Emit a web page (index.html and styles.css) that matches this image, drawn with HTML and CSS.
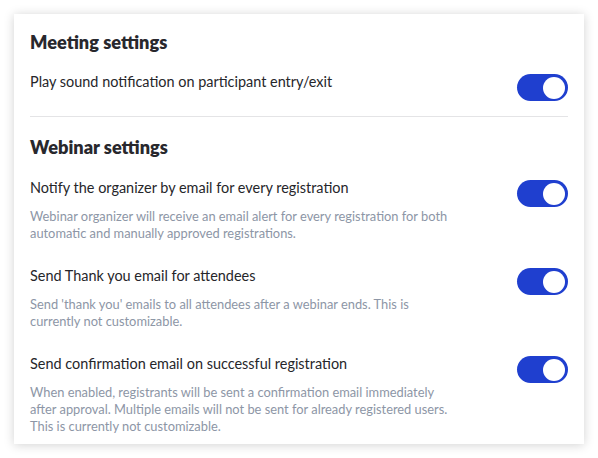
FILE: index.html
```html
<!DOCTYPE html>
<html>
<head>
<meta charset="utf-8">
<link rel="stylesheet" href="styles.css">
</head>
<body>
<div class="card">
  <section class="section section-meeting">
    <h2 class="title">Meeting settings</h2>
    <div class="row">
      <div class="text">
        <div class="label">Play sound notification on participant entry/exit</div>
      </div>
      <span class="toggle"><span class="knob"></span></span>
    </div>
  </section>
  <hr class="divider">
  <section class="section section-webinar">
    <h2 class="title">Webinar settings</h2>
    <div class="row">
      <div class="text">
        <div class="label">Notify the organizer by email for every registration</div>
        <p class="desc">Webinar organizer will receive an email alert for every registration for both automatic and manually approved registrations.</p>
      </div>
      <span class="toggle"><span class="knob"></span></span>
    </div>
    <div class="row">
      <div class="text">
        <div class="label">Send Thank you email for attendees</div>
        <p class="desc">Send 'thank you' emails to all attendees after a webinar ends. This is currently not customizable.</p>
      </div>
      <span class="toggle"><span class="knob"></span></span>
    </div>
    <div class="row">
      <div class="text">
        <div class="label">Send confirmation email on successful registration</div>
        <p class="desc">When enabled, registrants will be sent a confirmation email immediately after approval. Multiple emails will not be sent for already registered users. This is currently not customizable.</p>
      </div>
      <span class="toggle"><span class="knob"></span></span>
    </div>
  </section>
</div>
</body>
</html>
```
FILE: styles.css
```css
* { box-sizing: border-box; }
html, body { margin: 0; padding: 0; }
body {
  background: #ffffff;
  font-family: "Lato", "Open Sans", sans-serif;
  color: #2a2a2e;
  padding: 14px;
  width: 598px;
  height: 458px;
  overflow: hidden;
}
.card {
  width: 570px;
  height: 430px;
  background: #fff;
  box-shadow: 0 1px 10px rgba(0,0,0,0.18);
  padding: 16px 16px 0 16px;
  overflow: hidden;
}
.title {
  margin: 0;
  font-size: 18.2px;
  font-weight: 800;
  line-height: 24px;
  color: #28282d;
}
.row {
  display: flex;
  justify-content: space-between;
  align-items: flex-start;
  margin-top: 24px;
}
.title + .row { margin-top: 18px; }
.text { width: 450px; }
.label {
  font-size: 14.45px;
  line-height: 20px;
  color: #26262a;
}
.desc {
  margin: 10px 0 0 0;
  font-size: 12.85px;
  line-height: 17px;
  color: #8d96a6;
  width: 428px;
}
.toggle {
  width: 51px;
  height: 27px;
  margin-top: 2px;
  background: #1f3fcf;
  border-radius: 14px;
  display: flex;
  justify-content: flex-end;
  align-items: center;
  padding-right: 3px;
  flex: none;
}
.knob {
  width: 22px;
  height: 22px;
  border-radius: 50%;
  background: #fff;
}
.divider {
  border: 0;
  border-top: 1px solid #e4e4e6;
  margin: 15px 0 0 0;
}
.section-webinar { padding-top: 18px; }
.section-webinar .title + .row { margin-top: 19px; }
```
